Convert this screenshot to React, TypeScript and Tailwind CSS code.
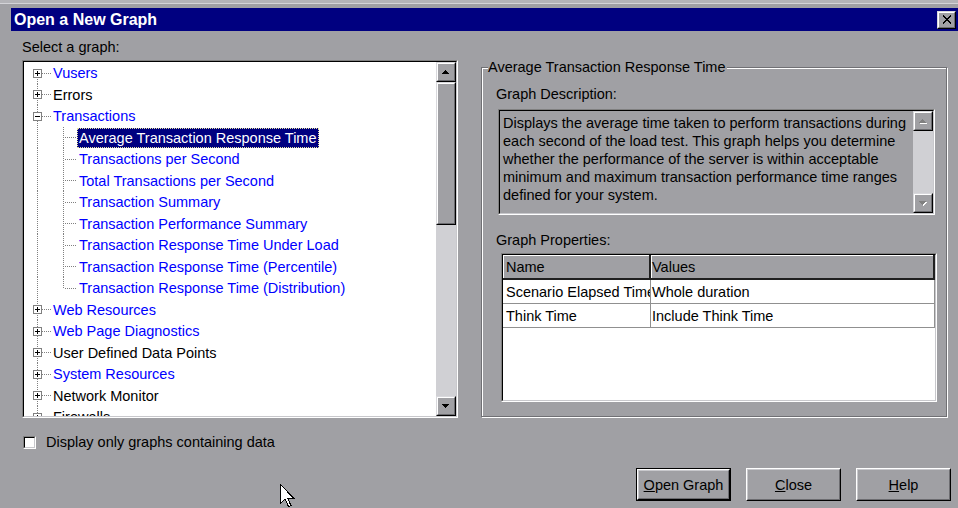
import React from 'react';

type TreeRow = {
  label: string;
  level: 0 | 1;
  blue: boolean;
  kind?: 'plus' | 'minus';
  selected?: boolean;
  last?: boolean;
};

const treeRows: TreeRow[] = [
  { label: 'Vusers', level: 0, blue: true, kind: 'plus' },
  { label: 'Errors', level: 0, blue: false, kind: 'plus' },
  { label: 'Transactions', level: 0, blue: true, kind: 'minus' },
  { label: 'Average Transaction Response Time', level: 1, blue: true, selected: true },
  { label: 'Transactions per Second', level: 1, blue: true },
  { label: 'Total Transactions per Second', level: 1, blue: true },
  { label: 'Transaction Summary', level: 1, blue: true },
  { label: 'Transaction Performance Summary', level: 1, blue: true },
  { label: 'Transaction Response Time Under Load', level: 1, blue: true },
  { label: 'Transaction Response Time (Percentile)', level: 1, blue: true },
  { label: 'Transaction Response Time (Distribution)', level: 1, blue: true, last: true },
  { label: 'Web Resources', level: 0, blue: true, kind: 'plus' },
  { label: 'Web Page Diagnostics', level: 0, blue: true, kind: 'plus' },
  { label: 'User Defined Data Points', level: 0, blue: false, kind: 'plus' },
  { label: 'System Resources', level: 0, blue: true, kind: 'plus' },
  { label: 'Network Monitor', level: 0, blue: false, kind: 'plus' },
  { label: 'Firewalls', level: 0, blue: false, kind: 'plus' },
];

const DOT = '#808080';

function Connector({ row, h, first }: { row: TreeRow; h: number; first: boolean }) {
  const cy = Math.floor(h / 2);
  const w = row.level === 0 ? 27 : 53;
  return (
    <svg width={w} height={h} className="shrink-0" shapeRendering="crispEdges">
      <line x1={13.5} y1={first ? cy : 0} x2={13.5} y2={h} stroke={DOT} strokeDasharray="1 1" />
      {row.level === 0 ? (
        <>
          <line x1={18} y1={cy + 0.5} x2={27} y2={cy + 0.5} stroke={DOT} strokeDasharray="1 1" />
          <rect x={9.5} y={cy - 3.5} width={8} height={8} fill="#ffffff" stroke="#808080" />
          <line x1={11} y1={cy + 0.5} x2={16} y2={cy + 0.5} stroke="#000000" />
          {row.kind === 'plus' && <line x1={13.5} y1={cy - 2} x2={13.5} y2={cy + 3} stroke="#000000" />}
        </>
      ) : (
        <>
          <line x1={39.5} y1={0} x2={39.5} y2={row.last ? cy : h} stroke={DOT} strokeDasharray="1 1" />
          <line x1={41} y1={cy + 0.5} x2={53} y2={cy + 0.5} stroke={DOT} strokeDasharray="1 1" />
        </>
      )}
    </svg>
  );
}

// Small pixel triangle for scroll arrows, built row by row.
function ArrowGlyph({ dir, disabled }: { dir: 'up' | 'down'; disabled?: boolean }) {
  const rows = [0, 1, 2, 3];
  const color = disabled ? '#808080' : '#000000';
  const rect = (r: number, dx: number, dy: number, fill: string) => {
    const half = dir === 'up' ? r : 3 - r;
    return <rect key={`${fill}-${r}`} x={3 - half + dx} y={r + 1 + dy} width={half * 2 + 1} height={1} fill={fill} />;
  };
  return (
    <svg width={9} height={7} viewBox="0 0 9 7" shapeRendering="crispEdges">
      {disabled && rows.map((r) => rect(r, 1, 1, '#ffffff'))}
      {rows.map((r) => rect(r, 0, 0, color))}
    </svg>
  );
}

function RaisedBox({ className, children }: { className: string; children?: React.ReactNode }) {
  return (
    <div className={`border border-t-[#d8d8dc] border-l-[#d8d8dc] border-b-black border-r-black ${className}`}>
      <div className="flex h-full w-full items-center justify-center border border-t-white border-l-white border-b-[#6c6c70] border-r-[#6c6c70] bg-[#a0a0a4]">
        {children}
      </div>
    </div>
  );
}

function ScrollBar({ thumb, disabled }: { thumb: boolean; disabled?: boolean }) {
  return (
    <div className="flex h-full w-[20px] shrink-0 flex-col bg-[#d0d0d4]">
      <RaisedBox className="h-[20px] w-[20px]">
        <ArrowGlyph dir="up" disabled={disabled} />
      </RaisedBox>
      {thumb ? <RaisedBox className="h-[143px] w-[20px]" /> : null}
      <div className="flex-1" />
      <RaisedBox className="h-[20px] w-[20px]">
        <ArrowGlyph dir="down" disabled={disabled} />
      </RaisedBox>
    </div>
  );
}

function Tree() {
  return (
    <div className="h-[358px] w-[436px] border border-t-[#808080] border-l-[#808080] border-b-white border-r-white">
      <div className="flex h-full w-full border border-t-black border-l-black border-b-[#c8c8cc] border-r-[#c8c8cc] bg-white">
        <div className="flex-1 overflow-hidden">
          {treeRows.map((row, i) => {
            const h = i % 2 === 0 ? 22 : 21;
            return (
              <div key={row.label} className={`flex items-center ${i % 2 === 0 ? 'h-[22px]' : 'h-[21px]'}`}>
                <Connector row={row} h={h} first={i === 0} />
                {row.selected ? (
                  <span className="flex h-[20px] items-center whitespace-nowrap border border-dotted border-[#e8e4a0] bg-[#000080] px-[1px] text-white">
                    {row.label}
                  </span>
                ) : (
                  <span className={`whitespace-nowrap px-[2px] ${row.blue ? 'text-[#0000ff]' : 'text-black'}`}>
                    {row.label}
                  </span>
                )}
              </div>
            );
          })}
        </div>
        <ScrollBar thumb />
      </div>
    </div>
  );
}

function Sunken({ className, inner, children }: { className: string; inner: string; children?: React.ReactNode }) {
  return (
    <div className={`border border-t-[#808080] border-l-[#808080] border-b-white border-r-white ${className}`}>
      <div className={`h-full w-full border border-t-black border-l-black border-b-[#c8c8cc] border-r-[#c8c8cc] ${inner}`}>
        {children}
      </div>
    </div>
  );
}

function PropertiesTable() {
  const data = [
    ['Scenario Elapsed Time', 'Whole duration'],
    ['Think Time', 'Include Think Time'],
  ];
  return (
    <Sunken className="ml-[19px] mt-[4px] h-[149px] w-[436px]" inner="bg-white overflow-hidden">
      <div className="flex h-[25px] bg-[#a0a0a4]">
        <div className="flex w-[148px] items-center border-b-2 border-r-2 border-b-[#202020] border-r-[#202020] pl-[3px] shadow-[inset_1px_1px_0_#ffffff]">
          Name
        </div>
        <div className="flex flex-1 items-center border-b-2 border-r-2 border-b-[#202020] border-r-[#202020] pl-[1px] shadow-[inset_1px_1px_0_#ffffff]">
          Values
        </div>
      </div>
      {data.map(([k, v]) => (
        <div key={k} className="flex h-[24px] border-b border-[#909090]">
          <div className="flex w-[148px] items-center overflow-hidden whitespace-nowrap border-r border-[#909090] pl-[3px]">
            {k}
          </div>
          <div className="flex flex-1 items-center whitespace-nowrap border-r border-[#909090] pl-[1px]">{v}</div>
        </div>
      ))}
    </Sunken>
  );
}

function Button({ children, isDefault }: { children: React.ReactNode; isDefault?: boolean }) {
  return (
    <div className={`h-[33px] w-[95px] ${isDefault ? 'border border-black' : ''}`}>
      <div className="flex h-full w-full items-center justify-center border border-t-white border-l-white border-b-black border-r-black">
        <div className="flex h-full w-full items-center justify-center border border-t-[#c8c8cc] border-l-[#c8c8cc] border-b-[#6c6c70] border-r-[#6c6c70]">
          {children}
        </div>
      </div>
    </div>
  );
}

export default function App() {
  return (
    <div className="relative h-[508px] w-[958px] overflow-hidden bg-[#a0a0a4] font-['Liberation_Sans',Arial,sans-serif] text-[14.5px] leading-[18px] text-black">
      {/* window frame */}
      <div className="h-[3px] bg-[#b4b4b8]" />
      <div className="h-[1px] bg-[#d4d4d8]" />
      <div className="pl-[11px] pt-[4px]">
        <div className="flex h-[23px] items-center justify-between bg-[#000080] pl-[3px] pr-[2px]">
          <span className="text-[16px] font-bold text-white">Open a New Graph</span>
          <RaisedBox className="h-[18px] w-[19px]">
            <svg width={10} height={9} viewBox="0 0 10 9" shapeRendering="crispEdges">
              <path d="M1 0.5 L9 8.5 M9 0.5 L1 8.5" stroke="#000000" strokeWidth={2} />
            </svg>
          </RaisedBox>
        </div>
      </div>

      <div className="flex pl-[22px]">
        <div className="flex w-[436px] flex-col">
          <div className="h-[29px] pt-[7px]">Select a graph:</div>
          <Tree />
        </div>

        <div className="relative ml-[23px] mt-[36px] h-[350px] w-[466px] border border-[#707074] shadow-[inset_1px_1px_0_#ffffff,1px_1px_0_#ffffff]">
          <span className="absolute left-[6px] top-[-10px] bg-[#a0a0a4] pr-[1px]">Average Transaction Response Time</span>
          <div className="ml-[14px] mt-[17px]">Graph Description:</div>
          <Sunken className="ml-[16px] mt-[6px] h-[106px] w-[437px]" inner="flex">
            <div className="flex-1 pl-[3px] pt-[3px]">
              Displays the average time taken to perform transactions during each second of the load test. This graph helps you determine whether the performance of the server is within acceptable minimum and maximum transaction performance time ranges defined for your system.
            </div>
            <ScrollBar thumb={false} disabled />
          </Sunken>
          <div className="ml-[14px] mt-[16px]">Graph Properties:</div>
          <PropertiesTable />
        </div>
      </div>

      <div className="ml-[23px] mt-[15px] flex items-center gap-[10px]">
        <div className="h-[13px] w-[13px] border border-t-[#808080] border-l-[#808080] border-b-white border-r-white">
          <div className="h-full w-full border border-t-black border-l-black border-b-[#c8c8cc] border-r-[#c8c8cc] bg-white" />
        </div>
        <span>Display only graphs containing data</span>
      </div>

      <div className="mt-[17px] flex justify-end gap-[15px] pr-[7px]">
        <Button isDefault>
          <span><span className="underline">O</span>pen Graph</span>
        </Button>
        <Button>
          <span><span className="underline">C</span>lose</span>
        </Button>
        <Button>
          <span><span className="underline">H</span>elp</span>
        </Button>
      </div>

      {/* mouse pointer */}
      <svg className="absolute left-[279px] top-[483px]" width={16} height={26} viewBox="0 0 16 26" shapeRendering="crispEdges">
        <path d="M1.5 1.5 L1.5 20.5 L6 16 L9.5 23.5 L12 22.5 L8.5 15 L14.5 15 Z" fill="#ffffff" stroke="#000000" />
      </svg>
    </div>
  );
}
